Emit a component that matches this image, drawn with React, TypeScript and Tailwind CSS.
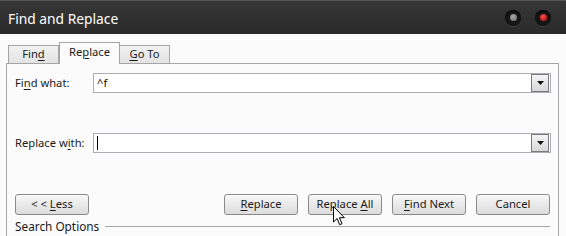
import React from "react";

const U = ({ children }: { children: React.ReactNode }) => (
  <span className="underline underline-offset-2">{children}</span>
);

function Btn({ children, w = "w-[74px]" }: { children: React.ReactNode; w?: string }) {
  return (
    <div
      className={`${w} h-[21px] flex items-center justify-center rounded-[3px] border border-[#8a8a8a] bg-gradient-to-b from-[#f7f7f7] to-[#dcdcdc] text-[#1a1a1a] shadow-[inset_0_1px_0_#ffffff]`}
    >
      <span>{children}</span>
    </div>
  );
}

function Combo({ value, caret }: { value?: string; caret?: boolean }) {
  return (
    <div className="w-[458px] h-[20px] border border-[#abadb3] bg-white flex items-center">
      <div className="flex-1 pl-[3px] text-[#111] flex items-center">
        {value}
        {caret && <span className="w-px h-[14px] bg-black" />}
      </div>
      <div className="w-[18px] h-[18px] mr-px border border-[#7a7a7a] bg-gradient-to-b from-[#f4f4f4] to-[#d8d8d8] flex items-center justify-center">
        <svg width="7" height="4" viewBox="0 0 7 4">
          <path d="M0 0h7L3.5 4z" fill="#111" />
        </svg>
      </div>
    </div>
  );
}

function Dot({ color }: { color: string }) {
  return (
    <div className="w-[16px] h-[16px] rounded-full bg-[#161616] shadow-[0_1px_0_#3a3a3a,inset_0_1px_2px_#000] flex items-center justify-center">
      <div className="w-[7px] h-[7px] rounded-full" style={{ background: color }} />
    </div>
  );
}

export default function App() {
  return (
    <div className="w-[566px] h-[236px] overflow-hidden bg-[#fbfbfb] relative font-['Segoe_UI','Noto_Sans',sans-serif] text-[11.2px] text-[#1a1a1a]">
      {/* title bar */}
      <div className="h-[34px] bg-gradient-to-b from-[#363636] to-[#2a2a2a] border-t border-[#555] flex items-center justify-between pl-[8px] pr-[15px]">
        <span className="text-white text-[13.8px] pt-[3px]">Find and Replace</span>
        <div className="flex gap-[14px] items-center">
          <Dot color="radial-gradient(circle at 40% 35%, #a8a8a8, #6a6a6a)" />
          <Dot color="radial-gradient(circle at 40% 35%, #ff4a4a, #a80c0c)" />
        </div>
      </div>

      {/* tabs */}
      <div className="mt-[8px] pl-[8px] flex items-end h-[21px] relative z-10">
        <div className="w-[51px] h-[18px] border border-b-0 border-[#a5a5a5] bg-gradient-to-b from-[#f2f2f2] to-[#e3e3e3] flex items-center justify-center">
          Fin<U>d</U>
        </div>
        <div className="w-[61px] h-[22px] -mb-px border border-b-0 border-[#a5a5a5] bg-[#fbfbfb] flex items-center justify-center pb-[2px]">
          Re<U>p</U>lace
        </div>
        <div className="w-[50px] h-[18px] border border-b-0 border-l-0 border-[#a5a5a5] bg-gradient-to-b from-[#f2f2f2] to-[#e3e3e3] flex items-center justify-center">
          <U>G</U>o To
        </div>
      </div>

      {/* panel */}
      <div className="ml-[6px] w-[553px] h-[200px] border border-b-0 border-[#a5a5a5] flex flex-col">
        <div className="mt-[9px] flex items-center">
          <div className="w-[86px] pl-[8px]">
            Fi<U>n</U>d what:
          </div>
          <Combo value="^f" />
        </div>
        <div className="mt-[40px] flex items-center">
          <div className="w-[86px] pl-[8px]">
            Replace w<U>i</U>th:
          </div>
          <Combo caret />
        </div>
        <div className="mt-[41px] flex items-center pl-[8px] pr-[8px]">
          <Btn>
            &lt; &lt; <U>L</U>ess
          </Btn>
          <div className="flex-1" />
          <div className="flex gap-[10px]">
            <Btn>
              <U>R</U>eplace
            </Btn>
            <Btn>
              Replace <U>A</U>ll
            </Btn>
            <Btn>
              <U>F</U>ind Next
            </Btn>
            <Btn>Cancel</Btn>
          </div>
        </div>
        <div className="mt-[3px] flex items-center pl-[8px] pr-[8px]">
          <span className="text-[11.8px]">Search Options</span>
          <div className="flex-1 ml-[6px] h-px bg-[#a5a5a5]" />
        </div>
      </div>

      {/* mouse cursor */}
      <svg className="absolute left-[333px] top-[206px]" width="12" height="20" viewBox="0 0 12 20">
        <path
          d="M0.5 0.5v15.5l3.6-3.5 2.6 6.2 2.3-1-2.6-6h5z"
          fill="#fff"
          stroke="#000"
          strokeWidth="1"
          strokeLinejoin="miter"
        />
      </svg>
    </div>
  );
}
